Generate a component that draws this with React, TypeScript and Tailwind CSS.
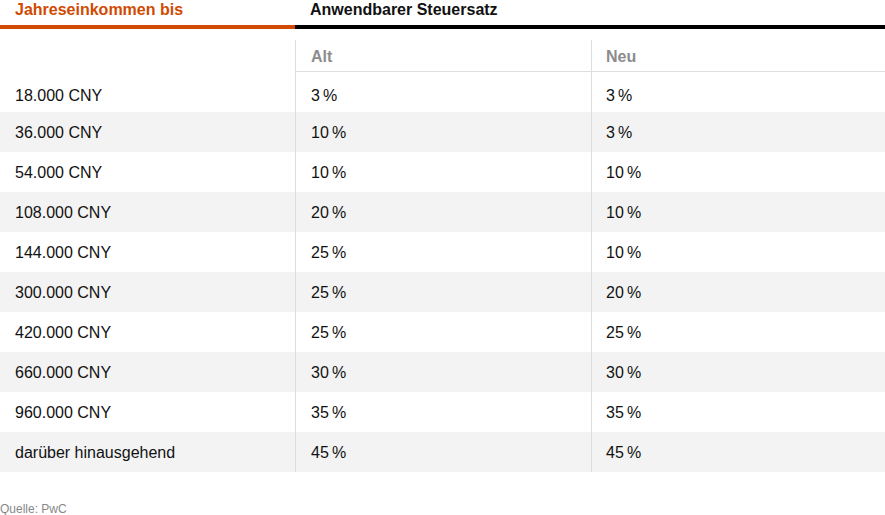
import React from "react"

const rows: [string, string, string][] = [
  ["18.000 CNY", "3 %", "3 %"],
  ["36.000 CNY", "10 %", "3 %"],
  ["54.000 CNY", "10 %", "10 %"],
  ["108.000 CNY", "20 %", "10 %"],
  ["144.000 CNY", "25 %", "10 %"],
  ["300.000 CNY", "25 %", "20 %"],
  ["420.000 CNY", "25 %", "25 %"],
  ["660.000 CNY", "30 %", "30 %"],
  ["960.000 CNY", "35 %", "35 %"],
  ["darüber hinausgehend", "45 %", "45 %"],
]

// thin space between number and percent sign, as in the source
const pct = (s: string) => s.replace(" ", "\u2009")

export default function App() {
  return (
    <div className="w-[885px] h-[515px] bg-white text-[16px] text-[#111] font-['Liberation_Sans',Arial,sans-serif]">
      {/* Header */}
      <div className="grid grid-cols-[295px_1fr] font-bold">
        <div className="h-[29px] pl-[15px] border-b-[4px] border-[#d04a02] text-[#d04a02] leading-[20px]">
          Jahreseinkommen bis
        </div>
        <div className="h-[29px] pl-[15px] border-b-[4px] border-black leading-[20px]">Anwendbarer Steuersatz</div>
      </div>

      <div className="mt-[11px] grid grid-cols-[295px_296px_1fr]">
        {/* Sub header */}
        <div className="h-[32px]" />
        <div className="h-[32px] pl-[15px] pt-[5px] border-l border-b border-[#dedede] font-bold text-[#8c8c8c]">Alt</div>
        <div className="h-[32px] pl-[14px] pt-[5px] border-l border-b border-[#dedede] font-bold text-[#8c8c8c]">Neu</div>

        {rows.map(([income, alt, neu], i) => {
          const bg = i % 2 === 1 ? "bg-[#f3f3f3]" : "bg-white"
          const pad = i === 0 ? "pt-[7px]" : "pt-[2px]"
          return (
            <React.Fragment key={income}>
              <div className={`h-[40px] pl-[15px] flex items-center ${pad} ${bg}`}>{income}</div>
              <div className={`h-[40px] pl-[15px] flex items-center border-l border-[#dedede] ${pad} ${bg}`}>{pct(alt)}</div>
              <div className={`h-[40px] pl-[14px] flex items-center border-l border-[#dedede] ${pad} ${bg}`}>{pct(neu)}</div>
            </React.Fragment>
          )
        })}
      </div>

      <div className="mt-[28px] text-[12px] text-[#888]">Quelle: PwC</div>
    </div>
  )
}
